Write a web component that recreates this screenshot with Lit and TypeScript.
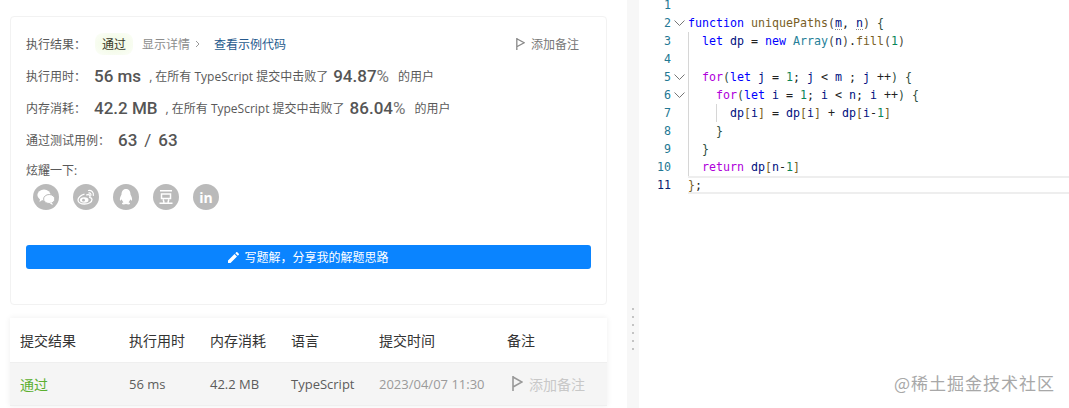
import { LitElement, html, css } from "lit";
import { customElement } from "lit/decorators.js";

const flag = (c: string, w: number, h: number) => html`<svg width=${w} height=${h} viewBox="0 0 11 15" preserveAspectRatio="none" fill="none" stroke=${c} stroke-width="1.6"><path d="M1 0V15M1 1L10 6L1 11"/></svg>`;

const T = (c: string, s: string) => html`<span class=${c}>${s}</span>`;

const lines: { n: number; fold?: boolean; cls?: string; content: unknown }[] = [
  { n: 1, content: "" },
  { n: 2, fold: true, content: html`${T("k", "function")} ${T("f", "uniquePaths")}${T("b", "(")}<span class="p w">m</span>, <span class="p w">n</span>${T("b", ")")} ${T("r", "{")}` },
  { n: 3, cls: "g", content: html`  ${T("k", "let")} ${T("p", "dp")} = ${T("k", "new")} ${T("c", "Array")}${T("b", "(")}${T("p", "n")}${T("b", ")")}.${T("f", "fill")}${T("b", "(")}${T("d", "1")}${T("b", ")")}` },
  { n: 4, cls: "g", content: "" },
  { n: 5, fold: true, cls: "g", content: html`  ${T("m", "for")}${T("r", "(")}${T("k", "let")} ${T("p", "j")} = ${T("d", "1")}; ${T("p", "j")} &lt; ${T("p", "m")} ; ${T("p", "j")} ++${T("r", ")")} ${T("r", "{")}` },
  { n: 6, fold: true, cls: "g", content: html`    ${T("m", "for")}${T("r", "(")}${T("k", "let")} ${T("p", "i")} = ${T("d", "1")}; ${T("p", "i")} &lt; ${T("p", "n")}; ${T("p", "i")} ++${T("r", ")")} ${T("r", "{")}` },
  { n: 7, cls: "g g2", content: html`      ${T("p", "dp")}${T("y", "[")}${T("p", "i")}${T("y", "]")} = ${T("p", "dp")}${T("y", "[")}${T("p", "i")}${T("y", "]")} + ${T("p", "dp")}${T("y", "[")}${T("p", "i")}-${T("d", "1")}${T("y", "]")}` },
  { n: 8, cls: "g", content: html`    ${T("r", "}")}` },
  { n: 9, cls: "g", content: html`  ${T("r", "}")}` },
  { n: 10, cls: "g", content: html`  ${T("m", "return")} ${T("p", "dp")}${T("y", "[")}${T("p", "n")}-${T("d", "1")}${T("y", "]")}` },
  { n: 11, cls: "active", content: html`${T("y", "}")};` },
];

@customElement("app-root")
export class AppRoot extends LitElement {
  static styles = css`
    :host { display: flex; width: 1069px; height: 408px; overflow: hidden; position: relative; background: #fff;
      font-family: "Open Sans", "Noto Sans CJK SC", sans-serif; font-size: 12px; color: #595959; }
    .left { width: 627px; flex: none; padding: 16px 20px 0 10px; box-sizing: border-box; }
    .card { width: 597px; height: 289px; box-sizing: border-box; border: 1px solid #f2f2f2; border-radius: 4px; padding: 11px 15px 0; }
    .row { height: 32px; display: flex; align-items: center; white-space: nowrap; }
    .label { margin-right: 8px; }
    .tail { margin-left: 8px; }
    .num { font-family: Roboto, sans-serif; font-size: 17px; font-weight: 500; color: #555; }
    .pct { font-weight: 400; color: #777; }
    .stat { margin: 0 9px 0 5px; }
    .sl { margin: 0 7px; font-weight: 400; }
    .badge { margin-left: 9px; width: 38px; height: 22px; display: flex; align-items: center; justify-content: center; color: #3a3a2a;
      background: radial-gradient(ellipse at center, #f4fbe9 40%, #fcfef9 100%); border-radius: 8px; }
    .detail { margin-left: 9px; color: #8c8c8c; }
    .chev { margin-left: 5px; }
    .link { margin-left: 14px; color: #25598d; }
    .note { margin-left: auto; margin-right: 12px; display: flex; align-items: center; gap: 6px; color: #777; }
    .share { margin-top: 7px; line-height: 16px; }
    .icons { display: flex; gap: 14px; margin: 5px 0 0 7px; }
    .ic { width: 26px; height: 26px; border-radius: 50%; background: #bababa; color: #fff; display: flex; align-items: center; justify-content: center; }
    .in { font: 700 14px "Open Sans", sans-serif; }
    .btn { margin-top: 35px; height: 24px; background: #0a84ff; border-radius: 3px; color: #fff; display: flex; align-items: center; justify-content: center; gap: 5px; }
    .table { margin-top: 13px; width: 597px; box-shadow: 0 0 6px rgba(0,0,0,.07); font-size: 14px; }
    .tr { display: grid; grid-template-columns: 109px 81px 81px 88px 128px 1fr; padding-left: 10px; height: 44px; align-items: center; white-space: nowrap; }
    .head { color: #333; }
    .body { background: #f5f5f5; color: #5c5c5c; font-size: 13px; height: 44px; border-top: 1px solid #efefef; border-bottom: 1px solid #efefef; box-sizing: border-box; padding-bottom: 1px; }
    .ok { color: #5cb030; font-size: 14px; }
    .time { color: #9a9a9a; }
    .tnote { display: flex; align-items: center; gap: 6px; padding-left: 5px; color: #c8c8c8; font-size: 14px; }
    .split { width: 12px; flex: none; background: #f7f7f7; display: flex; flex-direction: column; align-items: center; gap: 6px; padding-top: 308px; box-sizing: border-box; }
    .split i { width: 2px; height: 2px; background: #c4c4c4; flex: none; }
    .editor { flex: 1; font-family: "DejaVu Sans Mono", monospace; font-size: 11.63px; color: #222; }
    .ln { display: flex; height: 18px; line-height: 18px; }
    .ln.first { height: 14px; line-height: 10px; }
    .no { width: 32px; text-align: right; color: #237893; flex: none; }
    .no.cur { color: #0b216f; }
    .fold { width: 17px; flex: none; display: flex; align-items: center; justify-content: center; }
    .code { flex: 1; white-space: pre; box-sizing: border-box; }
    .g { box-shadow: inset 1px 0 0 #d6d6d6; }
    .g2 { background: linear-gradient(#d6d6d6, #d6d6d6) 28px 0 / 1px 100% no-repeat; }
    .active { border-top: 2px solid #eee; border-bottom: 2px solid #eee; line-height: 14px; }
    .k { color: #0000ff; } .f { color: #795e26; } .p { color: #001080; } .c { color: #267f99; }
    .d { color: #098658; } .m { color: #af00db; } .b { color: #4a4a3a; } .r { color: #2f4f3f; } .y { color: #795e26; }
    .w { text-decoration: underline dotted #888; text-underline-offset: 2px; }
    .mark { position: absolute; right: 14px; bottom: 13px; font: 17px "Noto Sans CJK SC", sans-serif; color: #a8a8a8; letter-spacing: 1px; }
  `;

  render() {
    return html`
      <div class="left">
        <div class="card">
          <div class="row">
            <span>执行结果：</span><span class="badge">通过</span>
            <span class="detail">显示详情</span>
            <svg class="chev" width="5" height="8" viewBox="0 0 5 8" fill="none" stroke="#999"><path d="M1 1l3 3-3 3"/></svg>
            <span class="link">查看示例代码</span>
            <span class="note">${flag("#888", 9, 12)}添加备注</span>
          </div>
          <div class="row">
            <span class="label">执行用时：</span><span class="num">56 ms</span>
            <span class="tail">, 在所有 TypeScript 提交中击败了</span>
            <span class="num stat">94.87<span class="pct">%</span></span><span>的用户</span>
          </div>
          <div class="row">
            <span class="label">内存消耗：</span><span class="num">42.2 MB</span>
            <span class="tail">, 在所有 TypeScript 提交中击败了</span>
            <span class="num stat">86.04<span class="pct">%</span></span><span>的用户</span>
          </div>
          <div class="row">
            <span class="label">通过测试用例：</span><span class="num">63<span class="sl">/</span>63</span>
          </div>
          <div class="share">炫耀一下:</div>
          <div class="icons">
            <span class="ic"><svg width="18" height="16" viewBox="0 0 18 16" fill="#fff">
              <ellipse cx="7" cy="6" rx="6.6" ry="5.4"/><path d="M3 9.5L2.5 13L6 10.5Z"/>
              <ellipse cx="12.2" cy="10" rx="5.6" ry="4.5" stroke="#bababa" stroke-width="1"/><path d="M15 13.5L15.8 16L12.8 14.5Z"/>
            </svg></span>
            <span class="ic"><svg width="18" height="16" viewBox="0 0 18 16" fill="none">
              <path d="M7.5 5.2C4 6 1 8.600 1 11c0 2.400 3 4 6.500 4 4 0 7.500-2 7.500-4.500 0-1.500-1.500-2-2.200-2.200.6-1.500.2-2.800-2-2.600-1 .1-1.500.5-1.500.5" stroke="#fff" stroke-width="1.300"/>
              <ellipse cx="7.200" cy="11" rx="4.300" ry="2.800" fill="#fff"/><circle cx="6.500" cy="11.200" r="1.400" fill="#bababa"/>
              <path d="M11.500 1.500c3-.5 5.500 2 4.800 5M11.800 4c1.500-.2 2.400 1 2.100 2.400" stroke="#fff" stroke-width="1.200" stroke-linecap="round"/>
            </svg></span>
            <span class="ic"><svg width="16" height="18" viewBox="0 0 16 18" fill="#fff">
              <path d="M8 1C4.800 1 3.500 3.500 3.500 6.500 2.500 8.500 1.500 10.500 2 12.500c.6.300 1.300-.5 1.700-1.200.3 1.200 1 2.200 1.800 2.900-1 .4-1.800 1-1.500 1.800.5.700 2.800.5 4 .1 1.200.4 3.500.6 4 -.1.300-.8-.5-1.400-1.500-1.800.8-.7 1.500-1.700 1.800-2.900.4.700 1.100 1.500 1.700 1.200.5-2-.5-4-1.500-6C12.500 3.500 11.200 1 8 1Z"/>
            </svg></span>
            <span class="ic"><svg width="16" height="16" viewBox="0 0 16 16" fill="none" stroke="#fff" stroke-width="1.500">
              <path d="M2 1.800H14M3.500 5H12.500V9.500H3.500ZM5.200 10.500L6 13.500M10.800 10.500L10 13.500M1.500 14.200H14.500"/>
            </svg></span>
            <span class="ic in">in</span>
          </div>
          <div class="btn">
            <svg width="11" height="11" viewBox="0 0 11 11" fill="#fff"><path d="M0 11V8.500L6.500 2L9 4.500L2.500 11ZM7.300 1.200L8.300 .2C8.600 -.1 9-.1 9.300 .2L10.800 1.700C11.100 2 11.100 2.400 10.800 2.700L9.800 3.700Z"/></svg>
            <span>写题解，分享我的解题思路</span>
          </div>
        </div>
        <div class="table">
          <div class="tr head"><span>提交结果</span><span>执行用时</span><span>内存消耗</span><span>语言</span><span>提交时间</span><span>备注</span></div>
          <div class="tr body">
            <span class="ok">通过</span><span>56 ms</span><span>42.2 MB</span><span>TypeScript</span><span class="time">2023/04/07 11:30</span>
            <span class="tnote">${flag("#999", 11, 15)}添加备注</span>
          </div>
        </div>
      </div>
      <div class="split"><i></i><i></i><i></i><i></i><i></i><i></i></div>
      <div class="editor">
        ${lines.map(
          (l) => html`<div class="ln ${l.n === 1 ? "first" : ""}">
            <span class="no ${l.n === 11 ? "cur" : ""}">${l.n}</span>
            <span class="fold">${l.fold
              ? html`<svg width="11" height="6" viewBox="0 0 11 6" fill="none" stroke="#666" stroke-width=".9"><path d="M.5 .5L5.500 5.500L10.500 .5"/></svg>`
              : ""}</span>
            <span class="code ${l.cls ?? ""}">${l.content}</span>
          </div>`
        )}
      </div>
      <div class="mark">@稀土掘金技术社区</div>
    `;
  }
}
